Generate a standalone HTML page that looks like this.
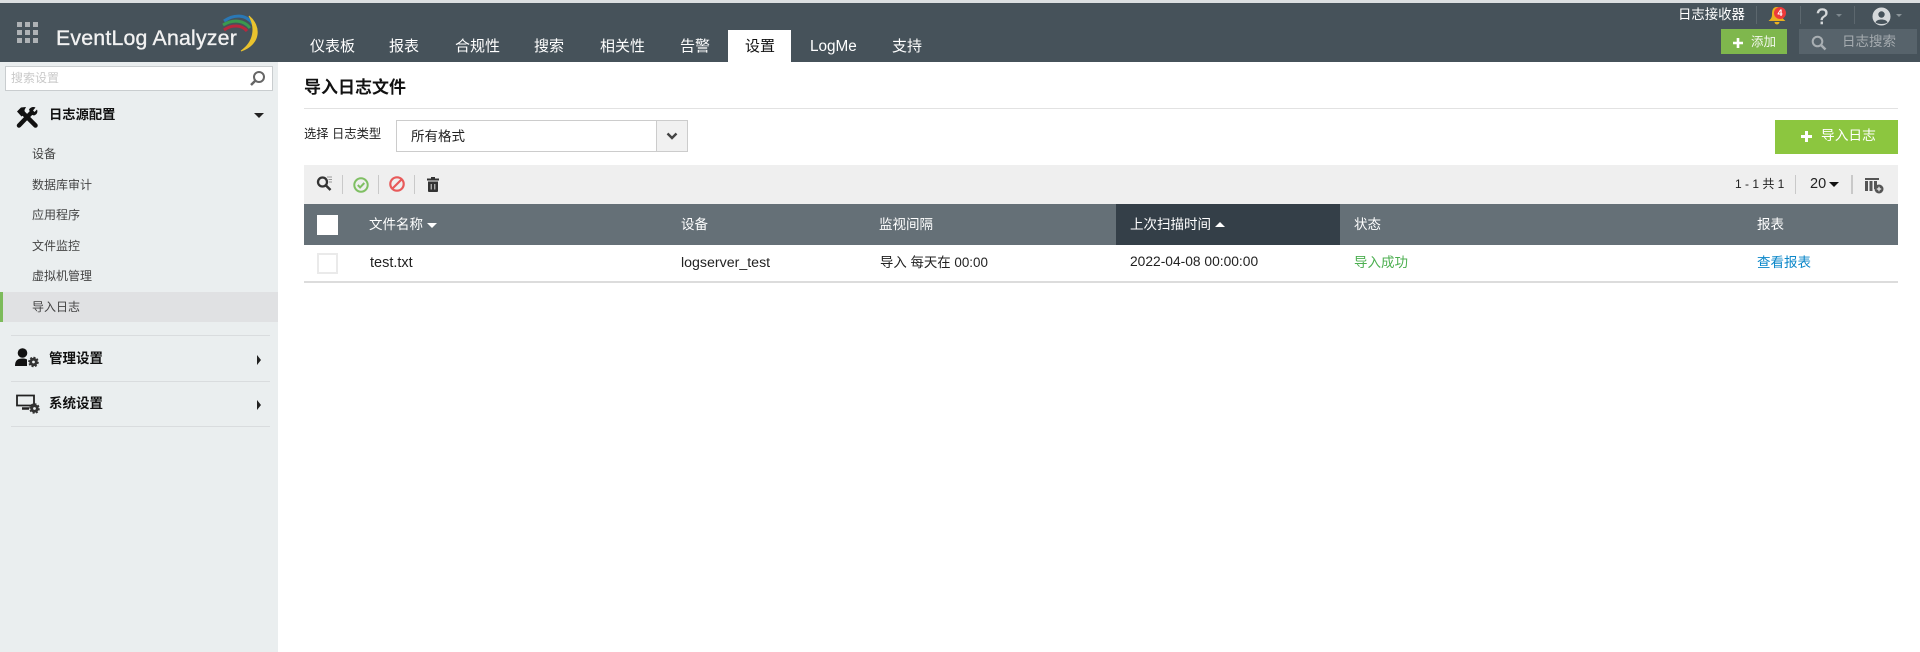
<!DOCTYPE html>
<html lang="zh">
<head>
<meta charset="utf-8">
<title>EventLog Analyzer</title>
<style>
html,body{margin:0;padding:0;width:1920px;height:652px;overflow:hidden;background:#fff}
body{position:relative;font-family:"Liberation Sans","Noto Sans CJK SC",sans-serif;color:#222}
div,svg,span{position:absolute}
.t{white-space:nowrap;line-height:20px;height:20px}
.nav{font-size:15px;color:#fff;top:37px}
.m{font-size:12px;color:#444;left:32px}
.b{font-size:13px;font-weight:bold;color:#111}
.th{font-size:13.5px;color:#fff;top:215px}
.td{font-size:13px;color:#222;top:253px}
.sep{background:#c9c9c9;width:1px}
</style>
</head>
<body>
<div style="left:0;top:0;width:1920px;height:3px;background:#dcdfe1"></div>
<div style="left:0;top:3px;width:1920px;height:59px;background:#46525a"></div>

<svg style="left:17px;top:22px" width="21" height="21"><g fill="#aeb2b5"><rect width="5" height="5"/><rect x="8" width="5" height="5"/><rect x="16" width="5" height="5"/><rect y="8" width="5" height="5"/><rect x="8" y="8" width="5" height="5"/><rect x="16" y="8" width="5" height="5"/><rect y="16" width="5" height="5"/><rect x="8" y="16" width="5" height="5"/><rect x="16" y="16" width="5" height="5"/></g></svg>
<div class="t" style="left:56px;top:27px;font-size:21.300px;line-height:22px;height:22px;color:#f2f2f2;letter-spacing:.2px;-webkit-text-stroke:.35px #f2f2f2">EventLog Analyzer</div>
<svg style="left:216px;top:10px" width="50" height="45" fill="none">
<path d="M8 11C18 4 30 4 37 14" stroke="#2a78b5" stroke-width="3"/>
<path d="M7 15C17 9 28 10 34 18" stroke="#3a9a4f" stroke-width="3"/>
<path d="M8 20C16 14 26 15 31 21" stroke="#b8283e" stroke-width="3"/>
<path d="M33 6C45 16 45 34 25 41C38 32 40 18 33 6Z" fill="#eac32e" stroke="#eac32e" stroke-width="1"/>
</svg>

<div class="t nav" style="left:310px">仪表板</div>
<div class="t nav" style="left:389px">报表</div>
<div class="t nav" style="left:455px">合规性</div>
<div class="t nav" style="left:534px">搜索</div>
<div class="t nav" style="left:600px">相关性</div>
<div class="t nav" style="left:680px">告警</div>
<div style="left:728px;top:30px;width:63px;height:32px;background:#fff"></div>
<div class="t nav" style="left:745px;color:#111">设置</div>
<div class="t nav" style="left:810px;font-size:15.3px">LogMe</div>
<div class="t nav" style="left:892px">支持</div>

<div class="t" style="left:1678px;top:5px;font-size:13.4px;color:#fff">日志接收器</div>
<div style="left:1756px;top:6px;width:1px;height:18px;background:#5c676e"></div>
<svg style="left:1767px;top:4px" width="20" height="22"><path d="M10 3C5.500 3 5 6.500 5 11C5 13.500 3.500 15.500 1.500 17H18.500C16.500 15.500 15 13.500 15 11C15 6.500 14.500 3 10 3Z" fill="#eab21f"/><path d="M7.500 18h5a2.500 2.500 0 0 1-5 0Z" fill="#eab21f"/></svg>
<div style="left:1774px;top:7px;width:12px;height:12px;border-radius:50%;background:#ee3b3b;color:#fff;font-size:9px;font-weight:bold;line-height:12px;text-align:center">4</div>
<div style="left:1800px;top:6px;width:1px;height:18px;background:#5c676e"></div>
<div class="t" style="left:1816px;top:6px;font-size:22px;line-height:22px;color:#d5d8da;-webkit-text-stroke:.4px #d5d8da">?</div>
<div style="left:1836px;top:14px;width:0;height:0;border:3px solid transparent;border-top:3px solid #7d878d"></div>
<div style="left:1854px;top:6px;width:1px;height:18px;background:#5c676e"></div>
<svg style="left:1872px;top:7px" width="19" height="19"><circle cx="9.500" cy="9.500" r="9" fill="#d5d8da"/><circle cx="9.500" cy="7.500" r="3.200" fill="#46525a"/><path d="M3.500 15.500C4.500 11.500 14.500 11.500 15.500 15.500C13 17.500 6 17.500 3.500 15.500Z" fill="#46525a"/></svg>
<div style="left:1896px;top:14px;width:0;height:0;border:3px solid transparent;border-top:3px solid #8a9398"></div>

<div style="left:1721px;top:29px;width:66px;height:25px;background:#7fb74d"></div>
<svg style="left:1733px;top:38px" width="10" height="10"><path d="M3.700 0h2.600v3.700H10v2.600H6.300V10H3.700V6.300H0V3.700h3.700Z" fill="#fff"/></svg>
<div class="t" style="left:1751px;top:32px;font-size:12.500px;color:#f3f7ee">添加</div>
<div style="left:1799px;top:29px;width:118px;height:25px;background:#57636b"></div>
<svg style="left:1811px;top:35px" width="16" height="16" fill="none" stroke="#a9afb3" stroke-width="2"><circle cx="6.500" cy="6.500" r="4.800"/><path d="M10 10l4.500 4.500" stroke-width="2.500"/></svg>
<div class="t" style="left:1842px;top:32px;font-size:13.500px;color:#a5abaf">日志搜索</div>

<!-- sidebar -->
<div style="left:0;top:62px;width:278px;height:590px;background:#eaeeef"></div>
<div style="left:5px;top:66px;width:266px;height:23px;background:#fff;border:1px solid #c9cdcf"></div>
<div class="t" style="left:11px;top:68px;font-size:12px;color:#c9c9c9">搜索设置</div>
<svg style="left:249px;top:70px" width="17" height="17" fill="none"><circle cx="10" cy="7" r="5" stroke="#666" stroke-width="2"/><path d="M6.500 10.500L2 15" stroke="#666" stroke-width="2.500"/></svg>

<svg style="left:16px;top:106px" width="22" height="22" fill="none"><path d="M7 7L19.500 19.500" stroke="#111" stroke-width="4.500" stroke-linecap="round"/><path d="M15 7L3 19.500" stroke="#111" stroke-width="4.500" stroke-linecap="round"/><path d="M1 5.500L5 1.500L10 1L8.500 4L9 8L5.500 10.500Z" fill="#111"/><path d="M13 3.500C14.500 1 17.500 .5 19.500 1.500L17 4.500L18.500 6L21 3.500C22 6 21 8.500 18 9.500L15 8.500Z" fill="#111"/></svg>
<div class="t b" style="left:49px;top:105px;font-size:13.300px">日志源配置</div>
<div style="left:254px;top:113px;width:0;height:0;border:5px solid transparent;border-top:5px solid #222;border-bottom:0"></div>

<div class="t m" style="top:144px">设备</div>
<div class="t m" style="top:175px">数据库审计</div>
<div class="t m" style="top:205px">应用程序</div>
<div class="t m" style="top:236px">文件监控</div>
<div class="t m" style="top:266px">虚拟机管理</div>
<div style="left:0;top:292px;width:278px;height:30px;background:#e0e1e3"></div>
<div style="left:0;top:292px;width:3px;height:30px;background:#7dbb5b"></div>
<div class="t m" style="top:297px">导入日志</div>

<div style="left:11px;top:335px;width:259px;height:1px;background:#d9dcde"></div>
<svg style="left:15px;top:348px" width="24" height="20"><circle cx="7.500" cy="5" r="4.800" fill="#111"/><path d="M0 18c0-6 3-7.500 7.500-7.500 2 0 3.500.3 4.500 1v6.500z" fill="#111"/><circle cx="18.500" cy="14" r="2.800" fill="none" stroke="#333" stroke-width="2.800"/><circle cx="18.500" cy="14" r="4.500" fill="none" stroke="#333" stroke-width="1.600" stroke-dasharray="2 1.500"/></svg>
<div class="t b" style="left:49px;top:349px;font-size:13.500px">管理设置</div>
<div style="left:257px;top:355px;width:0;height:0;border:5px solid transparent;border-left:4.500px solid #222;border-right:0"></div>
<div style="left:11px;top:381px;width:259px;height:1px;background:#d9dcde"></div>
<svg style="left:16px;top:394px" width="24" height="20" fill="none"><path d="M1 1.500h17v10H1z" stroke="#222" stroke-width="1.800"/><path d="M6 14.500h7" stroke="#222" stroke-width="2.500"/><circle cx="18.500" cy="14.500" r="2.800" fill="#eaeeef" stroke="#333" stroke-width="2.800"/><circle cx="18.500" cy="14.500" r="4.500" stroke="#333" stroke-width="1.600" stroke-dasharray="2 1.500"/></svg>
<div class="t b" style="left:49px;top:394px;font-size:13.500px">系统设置</div>
<div style="left:257px;top:400px;width:0;height:0;border:5px solid transparent;border-left:4.500px solid #222;border-right:0"></div>
<div style="left:11px;top:426px;width:259px;height:1px;background:#d9dcde"></div>

<!-- main -->
<div class="t" style="left:304px;top:78px;font-size:17px;font-weight:bold;color:#111">导入日志文件</div>
<div style="left:304px;top:108px;width:1594px;height:1px;background:#e2e2e2"></div>
<div class="t" style="left:304px;top:124px;font-size:12.300px;color:#222">选择 日志类型</div>
<div style="left:396px;top:120px;width:290px;height:30px;background:#fff;border:1px solid #ccc"></div>
<div style="left:656px;top:121px;width:30px;height:30px;background:#f1f1f1;border-left:1px solid #ccc"></div>
<div class="t" style="left:411px;top:127px;font-size:13.500px;color:#222">所有格式</div>
<svg style="left:666px;top:132px" width="12" height="9" fill="none"><path d="M1.500 1.500L6 6l4.500-4.500" stroke="#444" stroke-width="2.400"/></svg>

<div style="left:1775px;top:120px;width:123px;height:34px;background:#8cc63f"></div>
<svg style="left:1801px;top:131px" width="11" height="11"><path d="M4 0h3v4h4v3H7v4H4V7H0V4h4Z" fill="#fff"/></svg>
<div class="t" style="left:1821px;top:126px;font-size:13.700px;color:#fff">导入日志</div>

<div style="left:304px;top:165px;width:1594px;height:39px;background:#efefef"></div>
<svg style="left:316px;top:175px" width="17" height="17" fill="none"><circle cx="6.500" cy="7" r="4.500" stroke="#333" stroke-width="2.300"/><path d="M10 10.500l4.500 4.500" stroke="#333" stroke-width="2.500"/><path d="M11 2h5M12.500 4.500h3.500M13 7h3" stroke="#999" stroke-width="1"/></svg>
<div class="sep" style="left:342px;top:175px;height:19px"></div>
<svg style="left:353px;top:177px" width="16" height="16" fill="none"><circle cx="8" cy="8" r="6.700" stroke="#7fbf63" stroke-width="2"/><path d="M4.800 8l2.300 2.400 4.200-4.400" stroke="#7fbf63" stroke-width="2"/></svg>
<div class="sep" style="left:378px;top:175px;height:19px"></div>
<svg style="left:389px;top:176px" width="16" height="16" fill="none"><circle cx="8" cy="8" r="6.700" stroke="#e85a5a" stroke-width="2.200"/><path d="M3.500 12.500l9-9" stroke="#e85a5a" stroke-width="2.200"/></svg>
<div class="sep" style="left:414px;top:175px;height:19px"></div>
<svg style="left:427px;top:177px" width="12" height="15"><path d="M4 0h4v1.500h4v2H0v-2h4z" fill="#333"/><path d="M1 4.500h10V14a1 1 0 0 1-1 1H2a1 1 0 0 1-1-1z" fill="#333"/><path d="M4.200 7v5.500M7.800 7v5.500" stroke="#ddd" stroke-width="1"/></svg>

<div class="t" style="left:1735px;top:174px;font-size:12px;color:#222">1 - 1 共 1</div>
<div class="sep" style="left:1795px;top:175px;height:19px"></div>
<div class="t" style="left:1810px;top:174px;font-size:14.500px;color:#222">20</div>
<div style="left:1829px;top:182px;width:0;height:0;border:5.500px solid transparent;border-top:5px solid #111;border-bottom:0"></div>
<div style="left:1851px;top:175px;width:2px;height:19px;background:#c9c9c9"></div>
<svg style="left:1865px;top:178px" width="19" height="16"><path d="M0 0h14v2H0zM0 3h3v10H0zM4.500 3h3v10h-3zM9 3h3v8H9z" fill="#555"/><circle cx="14" cy="11" r="4.500" fill="#555"/><path d="M11.800 11h4.400M14 8.800v4.400" stroke="#eee" stroke-width="1.200"/></svg>

<div style="left:304px;top:204px;width:1594px;height:41px;background:#657077"></div>
<div style="left:1116px;top:204px;width:224px;height:41px;background:#343f48"></div>
<div style="left:317px;top:215px;width:21px;height:20px;background:#fff"></div>
<div class="t th" style="left:369px">文件名称</div>
<div style="left:427px;top:223px;width:0;height:0;border:5.500px solid transparent;border-top:5px solid #fff;border-bottom:0"></div>
<div class="t th" style="left:681px">设备</div>
<div class="t th" style="left:879px">监视间隔</div>
<div class="t th" style="left:1130px">上次扫描时间</div>
<div style="left:1215px;top:222px;width:0;height:0;border:5.500px solid transparent;border-bottom:5px solid #fff;border-top:0"></div>
<div class="t th" style="left:1354px">状态</div>
<div class="t th" style="left:1757px">报表</div>

<div style="left:317px;top:253px;width:17px;height:17px;background:#fff;border:2px solid #eaeaea"></div>
<div class="t td" style="left:370px;font-size:14.500px">test.txt</div>
<div class="t td" style="left:681px;font-size:14.200px">logserver_test</div>
<div class="t td" style="left:880px;font-size:13.400px">导入 每天在 00:00</div>
<div class="t td" style="left:1130px;top:252px;font-size:13.800px">2022-04-08 00:00:00</div>
<div class="t td" style="left:1354px;color:#4caf50;font-size:13.500px">导入成功</div>
<div class="t td" style="left:1757px;color:#0b87c9;font-size:13.500px">查看报表</div>
<div style="left:304px;top:281px;width:1594px;height:2px;background:#dcdcdc"></div>
</body>
</html>
